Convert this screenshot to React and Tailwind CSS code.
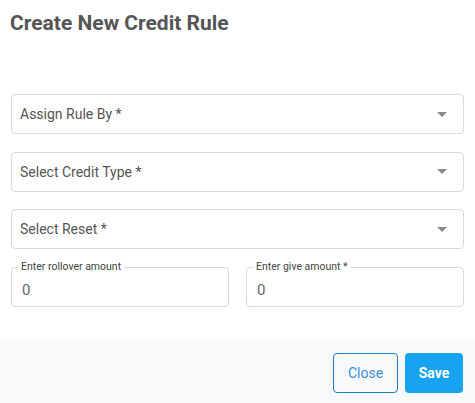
function SelectBox({ label }) {
  return (
    <div className="h-[40px] w-full border border-[#d9d9d9] rounded-[4px] flex items-center justify-between pl-[8px] pr-[16px] bg-white">
      <span className="text-[14px] text-[#555] leading-none">{label}</span>
      {/* caret */}
      <span className="w-0 h-0 border-l-[5px] border-r-[5px] border-t-[5px] border-l-transparent border-r-transparent border-t-[#8a8a8a]" />
    </div>
  );
}

function AmountInput({ label, value }) {
  return (
    <div className="relative flex-1 h-[40px] border border-[#d9d9d9] rounded-[4px] flex items-end pb-[8px] pl-[10px]">
      <span className="absolute left-[6px] -top-[7px] bg-white px-[3px] text-[10.5px] leading-[12px] text-[#444]">
        {label}
      </span>
      <span className="text-[15px] leading-none text-[#666]">{value}</span>
    </div>
  );
}

export default function App() {
  return (
    <div className="w-[475px] h-[403px] bg-white flex flex-col font-['Roboto',sans-serif]">
      <div className="px-[11px] pt-[8px] h-[339px]">
        <h2 className="-ml-[1px] text-[21px] leading-[30px] font-bold text-[#555]">
          Create New Credit Rule
        </h2>
        <div className="mt-[56px] flex flex-col gap-[17.6px]">
          <SelectBox label="Assign Rule By *" />
          <SelectBox label="Select Credit Type *" />
          <SelectBox label="Select Reset *" />
          <div className="flex gap-[17px]">
            <AmountInput label="Enter rollover amount" value="0" />
            <AmountInput label="Enter give amount *" value="0" />
          </div>
        </div>
      </div>
      <div className="flex-1 bg-[#f8f9fb] flex justify-end items-start gap-[7px] pt-[14px] pr-[12px]">
        <button className="h-[40px] w-[65px] rounded-[4px] border border-[#1b7fc4] text-[#3a8fd4] text-[14px]">
          Close
        </button>
        <button className="h-[40px] w-[58px] rounded-[4px] bg-[#18a3f0] text-white font-bold text-[14px]">
          Save
        </button>
      </div>
    </div>
  );
}
